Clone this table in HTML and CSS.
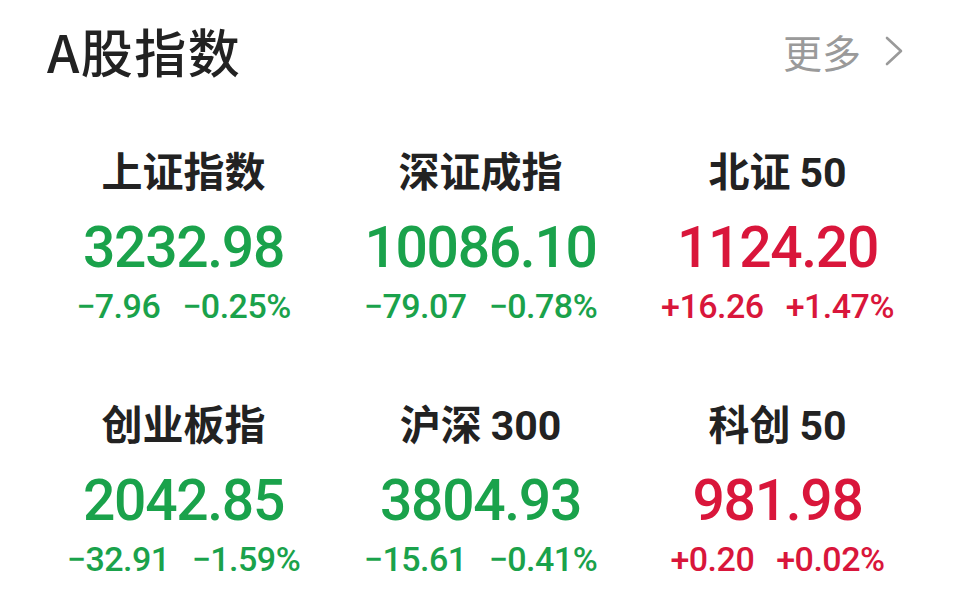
FILE: index.html
```html
<!DOCTYPE html>
<html lang="zh-CN">
<head>
<meta charset="utf-8">
<title>A股指数</title>
<link rel="stylesheet" href="styles.css">
</head>
<body>
<div class="page">
  <header class="head">
    <h1 class="title">A股指数</h1>
    <a class="more" href="#">更多
      <svg class="chev" width="22" height="32" viewBox="0 0 22 32"><path d="M4 3 L18 16 L4 29" fill="none" stroke="#9a9a9a" stroke-width="2.6" stroke-linecap="round" stroke-linejoin="round"/></svg>
    </a>
  </header>
  <section class="grid">
    <div class="cell down">
      <div class="name">上证指数</div>
      <div class="val">3232.98</div>
      <div class="chg"><span>−7.96</span><span>−0.25%</span></div>
    </div>
    <div class="cell down">
      <div class="name">深证成指</div>
      <div class="val">10086.10</div>
      <div class="chg"><span>−79.07</span><span>−0.78%</span></div>
    </div>
    <div class="cell up">
      <div class="name">北证<span class="num">50</span></div>
      <div class="val">1124.20</div>
      <div class="chg"><span>+16.26</span><span>+1.47%</span></div>
    </div>
    <div class="cell down">
      <div class="name">创业板指</div>
      <div class="val">2042.85</div>
      <div class="chg"><span>−32.91</span><span>−1.59%</span></div>
    </div>
    <div class="cell down">
      <div class="name">沪深<span class="num">300</span></div>
      <div class="val">3804.93</div>
      <div class="chg"><span>−15.61</span><span>−0.41%</span></div>
    </div>
    <div class="cell up">
      <div class="name">科创<span class="num">50</span></div>
      <div class="val">981.98</div>
      <div class="chg"><span>+0.20</span><span>+0.02%</span></div>
    </div>
  </section>
</div>
</body>
</html>
```
FILE: styles.css
```css
* { box-sizing: border-box; }
html, body { margin: 0; padding: 0; background: #fff; }
body { font-family: "Noto Sans CJK SC", "Noto Sans", sans-serif; color: #222; }
.page { width: 960px; height: 598px; overflow: hidden; }
.head {
  display: flex;
  justify-content: space-between;
  align-items: center;
  padding: 19px 55px 0 47px;
  height: 82px;
}
.title {
  margin: 0;
  font-size: 52px;
  line-height: 60px;
  letter-spacing: 1.5px;
  font-weight: 500;
  color: #222;
}
.more {
  display: flex;
  align-items: center;
  gap: 22px;
  font-size: 39px;
  line-height: 48px;
  color: #9a9a9a;
  text-decoration: none;
}
.chev { display: block; }
.grid {
  display: grid;
  grid-template-columns: repeat(3, 297px);
  row-gap: 72px;
  padding: 0 0 0 35px;
  margin-top: 63px;
}
.cell {
  display: flex;
  flex-direction: column;
  align-items: center;
}
.name {
  font-size: 41px;
  line-height: 48px;
  font-weight: 700;
  color: #222;
  height: 48px;
}
.name .num { font-family: "Roboto", sans-serif; font-weight: 700; margin-left: 9px; }
.val {
  margin-top: 23px;
  font-family: "Roboto", sans-serif;
  font-weight: 500;
  font-size: 57px;
  line-height: 64px;
  letter-spacing: -1.3px;
}
.chg {
  margin-top: 6px;
  display: flex;
  gap: 22px;
  font-family: "Roboto", sans-serif;
  font-weight: 500;
  font-size: 34px;
  line-height: 40px;
  letter-spacing: -0.5px;
}
.down .val, .down .chg { color: #1aa24b; }
.up .val, .up .chg { color: #d9163b; }
```
